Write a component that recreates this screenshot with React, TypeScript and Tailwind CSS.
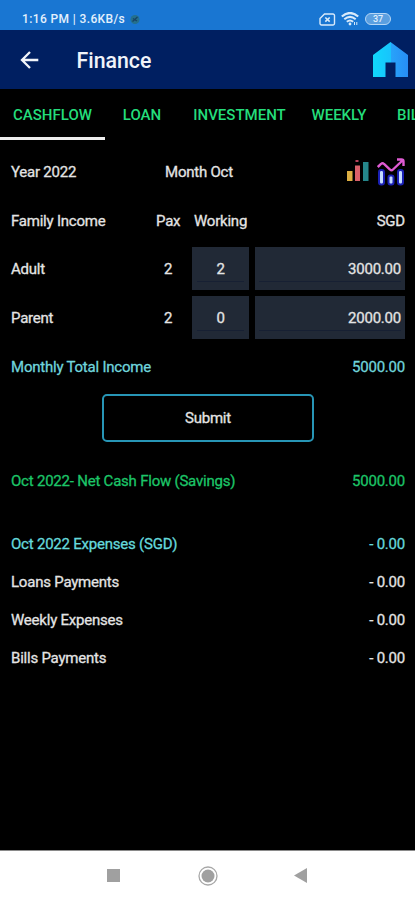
import clsx from 'clsx';

const tabs = [
  { label: 'CASHFLOW', width: 'w-[105px]', active: true },
  { label: 'LOAN', width: 'w-[74px]' },
  { label: 'INVESTMENT', width: 'w-[121px]' },
  { label: 'WEEKLY', width: 'w-[78px]' },
  { label: 'BILLS', width: 'w-[77px]' },
];

const members = [
  { name: 'Adult', pax: 2, working: 2, amount: '3000.00' },
  { name: 'Parent', pax: 2, working: 0, amount: '2000.00' },
];

const expenses = [
  { label: 'Loans Payments', amount: '- 0.00' },
  { label: 'Weekly Expenses', amount: '- 0.00' },
  { label: 'Bills Payments', amount: '- 0.00' },
];

function StatusBar() {
  return (
    <div className="flex h-[30px] items-center bg-[#1976d2] pt-2 pr-6 pl-[22px] text-[12px] font-medium text-[#e3f0fc]">
      <span className="tracking-[0.38px] whitespace-nowrap">1:16 PM | 3.6KB/s</span>
      <svg className="ml-[5px]" width="10" height="11" viewBox="0 0 10 11">
        <circle cx="5" cy="5.5" r="4.5" fill="#24708d" />
        <path d="M2.5 7.5 7.5 3M3 4.5l4 2.5" stroke="#174466" strokeWidth="1.4" />
      </svg>
      <div className="ml-auto flex items-center">
        <svg width="17" height="13" viewBox="0 0 17 13" fill="none" stroke="#d9eafa">
          <path d="M5.5 1H14a1.5 1.5 0 0 1 1.5 1.5v8A1.5 1.5 0 0 1 14 12H2.5A1.5 1.5 0 0 1 1 10.5V5.5z" strokeWidth="1.4" />
          <path d="m6.3 4.5 4.4 4.2M10.7 4.5 6.3 8.7" strokeWidth="1.6" />
        </svg>
        <svg className="ml-[5px]" width="18" height="14" viewBox="0 0 18 14" fill="none" stroke="#d9eafa">
          <path d="M.8 4.5Q9-2.5 17.2 4.5" strokeWidth="2.2" />
          <path d="M3.3 7.2Q9 2.5 14.7 7.2" strokeWidth="2.1" />
          <path d="M5.8 9.8Q9 7.2 12.2 9.8" strokeWidth="2" />
          <circle cx="9" cy="12" r="1.4" fill="#d9eafa" stroke="none" />
          <path d="M13.5 10v3M15.8 10v3" strokeWidth="1" />
        </svg>
        <div className="ml-[6px] flex h-[12px] w-[26px] items-center justify-center rounded-full border-[1.5px] border-[#b5d6f5] bg-[#5b9fe0] text-[9px] leading-none text-[#e3f0fc]">
          37
        </div>
      </div>
    </div>
  );
}

function Header() {
  return (
    <div className="flex h-[59px] items-center bg-[#001f61] pr-[7px] pl-[20px]">
      <svg width="19" height="18" viewBox="0 0 19 18" fill="none" stroke="#f2f5fa" strokeWidth="2.3">
        <path d="M18.3 9H2.5M10 1 2 9l8 8" />
      </svg>
      <h1 className="mt-[3px] ml-[37.5px] text-[21.3px] leading-none font-medium text-[#f0f3fa]">Finance</h1>
      <svg className="ml-auto" width="35" height="35" viewBox="0 0 35 35">
        <defs>
          <linearGradient id="house">
            <stop offset="0" stopColor="#10d8fc" />
            <stop offset="0.5" stopColor="#18c4fc" />
            <stop offset="0.5" stopColor="#28a4fa" />
            <stop offset="1" stopColor="#278df5" />
          </linearGradient>
        </defs>
        <path d="M17.5 0 35 13v22H22.500V20.5h-10V35H0V13z" fill="url(#house)" />
      </svg>
    </div>
  );
}

function TabBar() {
  return (
    <div className="flex h-[51px] overflow-hidden">
      {tabs.map((tab) => (
        <div
          key={tab.label}
          className={clsx(
            'flex shrink-0 items-center justify-center border-b-[3px] pt-[4px] text-[15px] font-medium whitespace-nowrap text-[#24dd7b]',
            tab.width,
            tab.active ? 'border-[#eeeeee]' : 'border-transparent',
          )}
        >
          {tab.label}
        </div>
      ))}
    </div>
  );
}

function BarsIcon() {
  return (
    <svg className="mb-[2px]" width="23" height="22" viewBox="0 0 23 22">
      <rect x="1" y="11" width="5.5" height="10" fill="#dcae42" />
      <rect x="9" y="5.5" width="5" height="15.5" fill="#d9606a" />
      <rect x="9.5" y="0" width="3" height="2" fill="#b5425c" />
      <rect x="17" y="2" width="5.5" height="19" fill="#25868a" />
    </svg>
  );
}

function TrendIcon() {
  return (
    <svg width="28" height="28" viewBox="0 0 28 28" fill="none">
      <g fill="#c4dcff" stroke="#1a20b4" strokeWidth="2">
        <rect x="2" y="12" width="5" height="14.5" rx="2.2" />
        <rect x="11.5" y="17.5" width="5" height="9" rx="2" />
        <rect x="21" y="12" width="5" height="14.5" rx="2.2" />
      </g>
      <path d="M.8 9 4 6Q5.5 4.5 7 6l6 5.5q1.5 1.5 3 0L26 2M20 1.5h4.5q2 0 2 2V8" stroke="#df5bd3" strokeWidth="2.4" />
    </svg>
  );
}

export default function App() {
  return (
    <div className="flex h-[900px] w-[415px] flex-col overflow-hidden bg-black font-['Roboto',sans-serif] text-[15px] text-[#e4e4e4]">
      <StatusBar />
      <Header />
      <TabBar />

      <main className="flex-1 pr-[10px] pl-[11px] tracking-[-0.22px] [-webkit-text-stroke:0.3px]">
        <div className="flex h-[64px] items-center">
          <span className="w-[154px]">Year 2022</span>
          <span>Month Oct</span>
          <div className="ml-auto flex items-center gap-[8px]">
            <BarsIcon />
            <TrendIcon />
          </div>
        </div>

        <div className="flex h-[35px] items-center">
          <span className="w-[145px]">Family Income</span>
          <span className="w-[38px]">Pax</span>
          <span>Working</span>
          <span className="ml-auto">SGD</span>
        </div>

        <div className="mt-[8px] flex flex-col gap-[6px]">
          {members.map((member) => (
            <div key={member.name} className="flex h-[43px] items-center">
              <span className="w-[138px] pt-[2px]">{member.name}</span>
              <span className="w-[38px] pt-[2px] text-center">{member.pax}</span>
              <div className="ml-[5px] flex h-full w-[57px] flex-col bg-[#212936] px-[5px] pb-[9px]">
                <div className="flex flex-1 items-center justify-center border-b border-[#172033] pt-[11px]">{member.working}</div>
              </div>
              <div className="ml-[6px] flex h-full flex-1 flex-col bg-[#212936] px-[4px] pb-[9px]">
                <div className="flex flex-1 items-center justify-end border-b border-[#172033] pt-[11px]">{member.amount}</div>
              </div>
            </div>
          ))}
        </div>

        <div className="flex h-[55px] items-center justify-between pt-[1px] text-[#70d5dc]">
          <span>Monthly Total Income</span>
          <span>5000.00</span>
        </div>

        <button className="ml-[91px] flex h-[48px] w-[212px] items-center justify-center rounded-[5px] border-2 border-[#2795b5] pt-[1px]">
          Submit
        </button>

        <div className="mt-[23px] flex h-[32px] items-center justify-between text-[#1cc568]">
          <span>Oct 2022- Net Cash Flow (Savings)</span>
          <span>5000.00</span>
        </div>

        <div className="mt-[28px] flex h-[38px] items-center justify-between text-[#65d9dc]">
          <span>Oct 2022 Expenses (SGD)</span>
          <span>- 0.00</span>
        </div>
        {expenses.map((expense) => (
          <div key={expense.label} className="flex h-[38px] items-center justify-between">
            <span>{expense.label}</span>
            <span>{expense.amount}</span>
          </div>
        ))}
      </main>

      <nav className="flex h-[50px] items-center border-t border-[#8a8a8a] bg-white pl-[107px]">
        <div className="size-[13px] bg-[#a0a0a0]" />
        <svg className="ml-[78px]" width="20" height="20" viewBox="0 0 20 20">
          <circle cx="10" cy="10" r="9" fill="none" stroke="#a8a8a8" strokeWidth="1.3" />
          <circle cx="10" cy="10" r="6.5" fill="#a0a0a0" />
        </svg>
        <svg className="ml-[76px]" width="13" height="15" viewBox="0 0 13 15">
          <path d="M13 0v15L0 7.5z" fill="#a0a0a0" />
        </svg>
      </nav>
    </div>
  );
}
